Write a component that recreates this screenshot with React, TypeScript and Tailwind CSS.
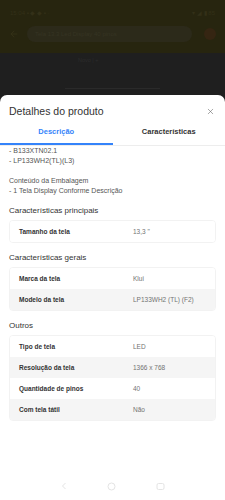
import React from 'react';
import { X, ArrowLeft } from 'lucide-react';

type Row = { label: string; value: string };

const sections: { title: string; rows: Row[] }[] = [
  { title: 'Características principais', rows: [{ label: 'Tamanho da tela', value: '13,3 "' }] },
  {
    title: 'Características gerais',
    rows: [
      { label: 'Marca da tela', value: 'Klui' },
      { label: 'Modelo da tela', value: 'LP133WH2 (TL) (F2)' },
    ],
  },
  {
    title: 'Outros',
    rows: [
      { label: 'Tipo de tela', value: 'LED' },
      { label: 'Resolução da tela', value: '1366 x 768' },
      { label: 'Quantidade de pinos', value: '40' },
      { label: 'Com tela tátil', value: 'Não' },
    ],
  },
];

function SpecTable({ rows }: { rows: Row[] }) {
  return (
    <div className="mx-[9px] rounded-[4px] border border-[#f2f2f2] overflow-hidden">
      {rows.map((r, i) => (
        <div
          key={r.label}
          className={`flex items-center h-[21px] ${i % 2 === 1 ? 'bg-[#f5f5f5]' : 'bg-white'}`}
        >
          <span className="w-[123px] pl-[9px] text-[6.5px] font-semibold text-[#333333]">{r.label}</span>
          <span className="text-[6.5px] text-[#737373]">{r.value}</span>
        </div>
      ))}
    </div>
  );
}

export default function App() {
  return (
    <div
      className="w-[225px] h-[500px] flex flex-col overflow-hidden bg-[#1f1f1f]"
      style={{ fontFamily: '"Liberation Sans", Arial, sans-serif' }}
    >
      {/* dimmed page behind the sheet */}
      <div className="h-[53px] bg-[#27250f] flex flex-col">
        <div className="h-[26px] flex items-center justify-between px-[10px] text-[6px] text-[#333018]">
          <span>15:04 ▪ ◆ ◆ ▪ ·</span>
          <span>▾ ◢ ▮ 85</span>
        </div>
        <div className="flex items-center gap-[8px] px-[9px]">
          <ArrowLeft size={10} className="text-[#363318]" strokeWidth={2} />
          <div className="flex-1 h-[16px] rounded-full bg-[#2c2a1a] flex items-center px-[8px] text-[6px] text-[#363423]">
            Tela 13.3 Led Display 40 pinos
          </div>
          <div className="w-[12px] h-[12px] rounded-full bg-[#352512] ml-[4px]" />
        </div>
      </div>
      <div className="h-[42px] relative">
        <div className="absolute left-[78px] top-[3px] text-[5.5px] text-[#2c2c2c]">Novo | +</div>
        <div className="absolute left-[65px] top-[35px] w-[95px] h-[1px] bg-[#2a2a2a]" />
      </div>

      {/* bottom sheet */}
      <div className="flex-1 bg-white rounded-t-[7px] flex flex-col">
        <div className="h-[30px] flex items-center justify-between pl-[9px] pr-[10px] pt-[3px]">
          <span className="text-[10.5px] text-[#333333]">Detalhes do produto</span>
          <X size={9} strokeWidth={1.5} className="text-[#666666]" />
        </div>
        <div className="flex h-[20px]">
          <div className="flex-1 flex flex-col items-center pt-[2px]">
            <span className="text-[7.5px] font-semibold text-[#3483fa] leading-[10px]">Descrição</span>
            <div className="mt-auto self-stretch h-[2px] bg-[#3483fa]" />
          </div>
          <div className="flex-1 flex justify-center pt-[2px]">
            <span className="text-[7.5px] font-semibold text-[#333333] leading-[10px]">Características</span>
          </div>
        </div>
        <div className="h-[1px] bg-[#ededed]" />

        <div className="px-[9px] text-[7px] leading-[10px] text-[#555555]">
          <div>- B133XTN02.1</div>
          <div>- LP133WH2(TL)(L3)</div>
          <div className="h-[10px]" />
          <div>Conteúdo da Embalagem</div>
          <div>- 1 Tela Display Conforme Descrição</div>
        </div>

        {sections.map((s) => (
          <div key={s.title}>
            <div className="px-[9px] mt-[9px] mb-[3px] h-[12px] leading-[12px] text-[8px] text-[#333333]">
              {s.title}
            </div>
            <SpecTable rows={s.rows} />
          </div>
        ))}

        <div className="flex-1" />
        <div className="h-[24px] flex items-center justify-around px-[40px] text-[#e4e4e4] mb-[2px]">
          <svg width="8" height="8" viewBox="0 0 8 8" fill="none" stroke="currentColor" strokeWidth="1">
            <path d="M5.5 1 L2.5 4 L5.5 7" />
          </svg>
          <svg width="9" height="9" viewBox="0 0 9 9" fill="none" stroke="currentColor" strokeWidth="1">
            <circle cx="4.5" cy="4.5" r="3.5" />
          </svg>
          <svg width="9" height="9" viewBox="0 0 9 9" fill="none" stroke="currentColor" strokeWidth="1">
            <rect x="1" y="1.5" width="7" height="6" rx="1.5" />
          </svg>
        </div>
      </div>
    </div>
  );
}
